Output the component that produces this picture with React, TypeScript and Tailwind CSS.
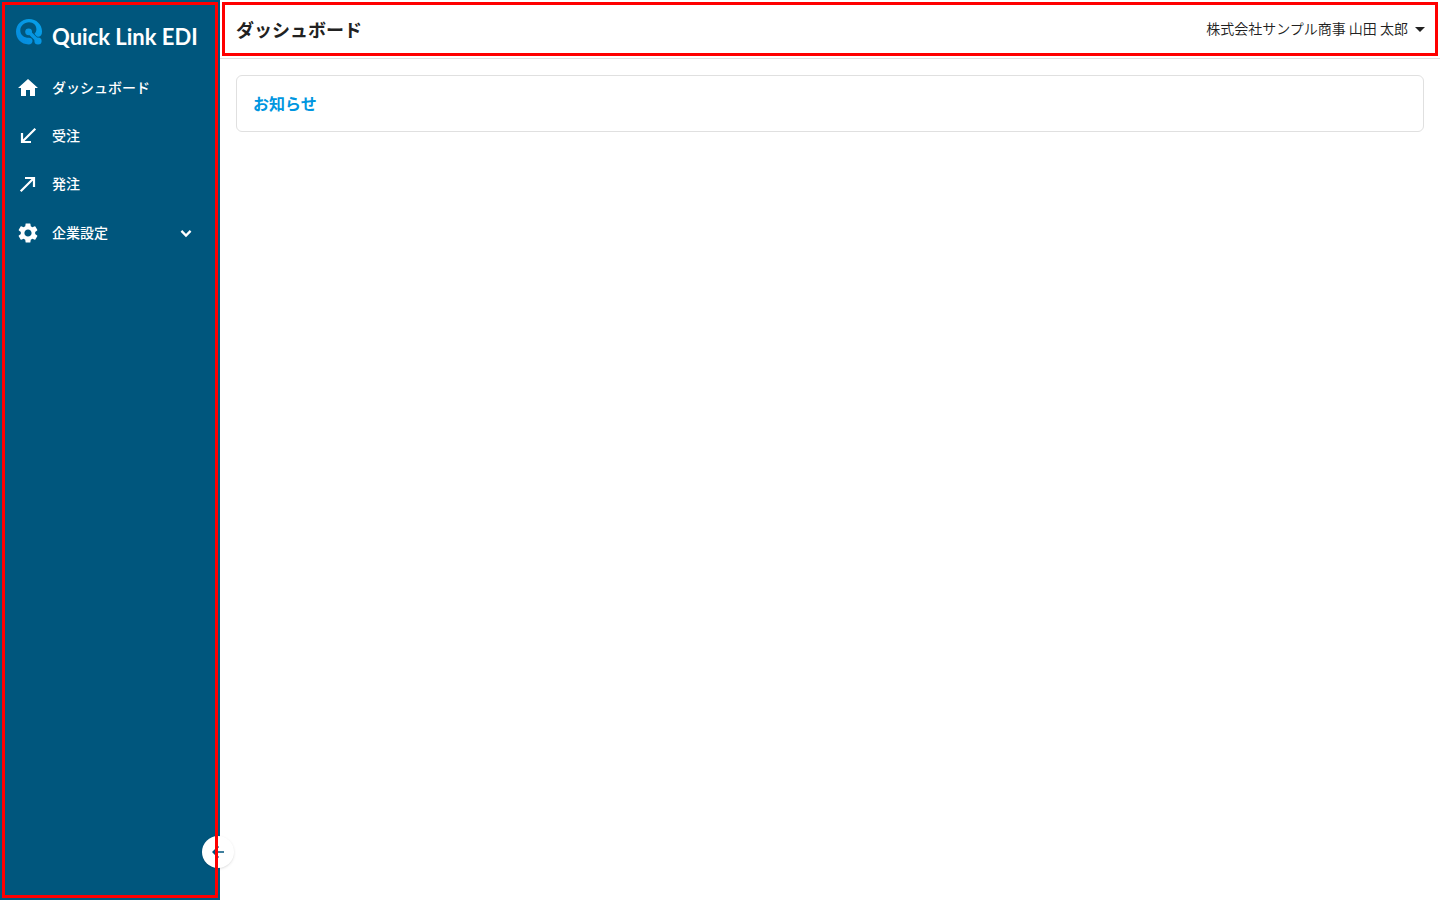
import type { ReactNode } from "react";
import { MdArrowBack, MdArrowDropDown, MdHome, MdSettings } from "react-icons/md";

function LogoMark() {
  return (
    <svg viewBox="0 0 26 26" className="h-[26px] w-[26px] shrink-0" aria-hidden="true">
      <defs>
        <linearGradient id="mark" gradientUnits="userSpaceOnUse" x1="0" y1="26" x2="26" y2="0">
          <stop offset="0" stopColor="#0588dc" />
          <stop offset="1" stopColor="#06a3ea" />
        </linearGradient>
      </defs>
      <g fill="url(#mark)">
        <path d="M13 0C5.600 0 0 5.600 0 12.800C0 20 5.400 25.400 12.600 25.400C15 25.400 16.500 24 16.500 22C16.500 20 15 18.800 12.800 18.800C8 18.800 4.300 16 4.300 11.500C4.300 7 8 3.300 13 3.300C17.500 3.300 20.400 6.500 20.400 10.300C20.400 12 19.700 13.500 18.500 14.800L20.500 17.200C24 18.800 26 16.500 26 12.500C26 5.500 20.400 0 13 0Z" />
        <circle cx="12.600" cy="12.800" r="3.400" />
        <circle cx="22" cy="22" r="3.600" />
        <path d="M12.600 12.800L22 22" stroke="url(#mark)" strokeWidth="3.600" />
      </g>
    </svg>
  );
}

function LineIcon({ d, width, className }: { d: string; width: number; className?: string }) {
  return (
    <svg
      viewBox="0 0 24 24"
      className={className ?? "size-6"}
      fill="none"
      stroke="currentColor"
      strokeWidth={width}
      aria-hidden="true"
    >
      <path d={d} />
    </svg>
  );
}

function NavItem({ icon, label, expandable }: { icon: ReactNode; label: string; expandable?: boolean }) {
  const body = (
    <>
      <span className="text-2xl">{icon}</span>
      <span className="grow pb-0.5 text-left">{label}</span>
      {expandable && <LineIcon d="M6.500 9.500l5.500 5.500l5.500-5.500" width={2.8} className="mr-2 size-5" />}
    </>
  );
  const style = "flex w-full items-center gap-3 px-4 text-sm font-medium text-white";
  return (
    <li>
      {expandable ? (
        <button type="button" aria-expanded="false" className={`${style} h-[50px]`}>
          {body}
        </button>
      ) : (
        <a href="#" className={`${style} h-12`}>
          {body}
        </a>
      )}
    </li>
  );
}

function Highlight() {
  return <div className="pointer-events-none absolute inset-0.5 z-20 border-3 border-[#ff0000]" />;
}

export default function App() {
  return (
    <div className="flex min-h-screen bg-white font-['Noto_Sans_CJK_JP',sans-serif] text-[#212121]">
      <aside className="relative w-[220px] shrink-0 bg-[#00567d]">
        <a href="#" className="flex h-16 items-center gap-2.5 px-4 text-white">
          <LogoMark />
          <span className="pt-2.5 font-['Lato',sans-serif] text-[22px] leading-7 font-bold whitespace-nowrap">
            Quick Link EDI
          </span>
        </a>
        <nav>
          <ul>
            <NavItem icon={<MdHome />} label="ダッシュボード" />
            <NavItem icon={<LineIcon d="M19.300 4.700L6.500 17.500M6 9v9h9" width={2.2} />} label="受注" />
            <NavItem icon={<LineIcon d="M4.700 19.300L17.500 6.500M9 6h9v9" width={2.2} />} label="発注" />
            <NavItem icon={<MdSettings />} label="企業設定" expandable />
          </ul>
        </nav>
        <button
          type="button"
          aria-label="メニューを閉じる"
          className="absolute -right-3.5 bottom-8 z-10 flex size-8 items-center justify-center rounded-full bg-white text-lg text-[#00567d] shadow-sm"
        >
          <MdArrowBack />
        </button>
        <Highlight />
      </aside>
      <div className="min-w-0 grow">
        <header className="relative flex h-[59px] items-center justify-between border-b border-[#e0e0e0] pr-2 pl-4">
          <h1 className="text-lg font-bold">ダッシュボード</h1>
          <button type="button" className="flex items-center text-sm font-[350]">
            <span className="pb-0.5">株式会社サンプル商事 山田 太郎</span>
            <MdArrowDropDown className="text-2xl" />
          </button>
          <Highlight />
        </header>
        <main className="p-4">
          <section className="rounded-md border border-[#e0e0e0] p-4">
            <h2 className="text-base leading-[23px] font-bold text-[#0096e0]">お知らせ</h2>
          </section>
        </main>
      </div>
    </div>
  );
}
